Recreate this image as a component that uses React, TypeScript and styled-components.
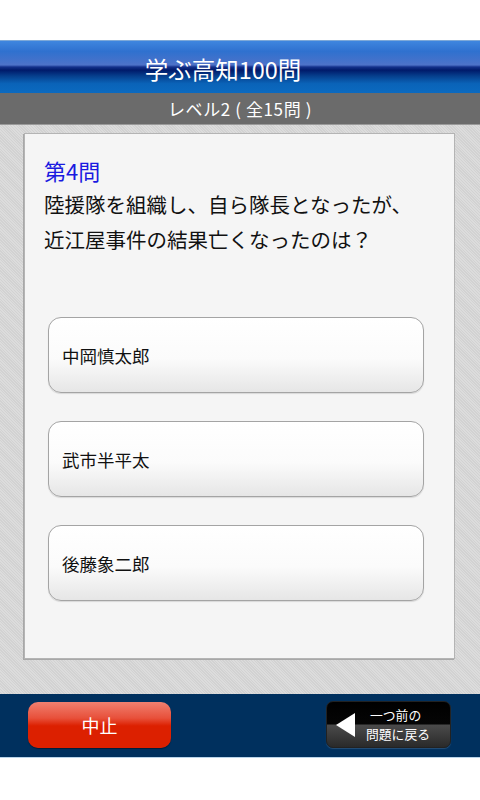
import React from "react";
import styled, { createGlobalStyle } from "styled-components";

const Global = createGlobalStyle`
  html, body { margin: 0; padding: 0; background: #ffffff; }
  body { font-family: "Noto Sans CJK JP", "Noto Sans", sans-serif; }
  * { box-sizing: border-box; }
`;

const Screen = styled.div`
  width: 480px;
  height: 800px;
  display: flex;
  flex-direction: column;
  background: #ffffff;
`;

const TopGap = styled.div`
  height: 40px;
  flex: none;
`;

const TitleBar = styled.div`
  height: 53px;
  flex: none;
  display: flex;
  align-items: center;
  justify-content: center;
  padding-right: 34px;
  padding-top: 4px;
  background: linear-gradient(
    to bottom,
    #3f86df 0%,
    #2f71cf 20%,
    #4d72c8 46%,
    #13308a 50%,
    #001a6a 56%,
    #06418f 68%,
    #0a63b8 82%,
    #0b6ac0 100%
  );
  border-top: 1px solid #7ea9d8;
  color: #ffffff;
  font-size: 23.5px;
  font-weight: 400;
`;

const SubBar = styled.div`
  height: 32px;
  flex: none;
  display: flex;
  align-items: center;
  justify-content: center;
  background: #6b6b6b;
  border-bottom: 1px solid #9a9a9a;
  color: #ffffff;
  font-size: 17px;
  font-weight: 400;
  letter-spacing: 0.6px;
  white-space: pre;
`;

const Content = styled.div`
  flex: none;
  height: 569px;
  padding: 8px 25px 35px 24px;
  display: flex;
  background-color: #d7d7d7;
  background-image: repeating-linear-gradient(
    45deg,
    #dcdcdc 0px,
    #dcdcdc 1px,
    #d2d2d2 1px,
    #d2d2d2 2px
  );
`;

const Card = styled.div`
  flex: 1;
  background: #f5f5f5;
  border: 1px solid #b4b4b4;
  box-shadow: -1px 1px 0 #a8a8a8;
  padding: 21px 20px 0 19px;
  display: flex;
  flex-direction: column;
`;

const QNumber = styled.div`
  color: #1a1ae0;
  font-size: 22px;
  line-height: 30px;
`;

const QText = styled.div`
  color: #111111;
  font-size: 20.5px;
  line-height: 35px;
  margin-top: 2px;
  white-space: nowrap;
`;

const Choices = styled.div`
  margin-top: 60px;
  padding-left: 4px;
  display: flex;
  flex-direction: column;
  gap: 28px;
`;

const Choice = styled.button`
  height: 76px;
  width: 376px;
  display: flex;
  align-items: center;
  padding: 0 0 0 13px;
  border: 1px solid #a4a4a4;
  border-radius: 13px;
  background: linear-gradient(to bottom, #ffffff 0%, #fbfbfb 55%, #e6e6e6 100%);
  box-shadow: 0 1px 1px rgba(0, 0, 0, 0.12);
  font-family: "Noto Sans CJK JP", "Noto Sans", sans-serif;
  font-size: 17.5px;
  color: #111111;
  text-align: left;
  cursor: pointer;
`;

const Footer = styled.div`
  height: 64px;
  flex: none;
  background: #00305e;
  border-bottom: 1px solid #b9d4ea;
  display: flex;
  align-items: center;
  justify-content: space-between;
  padding: 0 29px 2px 28px;
`;

const StopButton = styled.button`
  width: 143px;
  height: 46px;
  border: none;
  border-radius: 10px;
  background: linear-gradient(to bottom, #f08070 0%, #e8503a 35%, #dc2000 52%, #dc2000 100%);
  box-shadow: 0 1px 1px rgba(0, 0, 0, 0.4);
  color: #ffffff;
  font-family: "Noto Sans CJK JP", "Noto Sans", sans-serif;
  font-size: 18px;
  display: flex;
  align-items: center;
  justify-content: center;
  cursor: pointer;
`;

const BackButton = styled.button`
  width: 125px;
  height: 47px;
  border: 1px solid #222;
  border-radius: 7px;
  background: linear-gradient(to bottom, #000000 0%, #050505 48%, #4a4a4a 52%, #2a2a2a 100%);
  box-shadow: 0 1px 1px rgba(255, 255, 255, 0.15);
  display: flex;
  align-items: center;
  padding: 1px 0 0 9px;
  gap: 11px;
  color: #ffffff;
  font-family: "Noto Sans CJK JP", "Noto Sans", sans-serif;
  cursor: pointer;
`;

const BackText = styled.span`
  display: flex;
  flex-direction: column;
  font-size: 12.8px;
  line-height: 18.6px;
  text-align: left;
`;

const BackLine = styled.span<{ indent?: number }>`
  padding-left: ${(p) => p.indent ?? 0}px;
`;

const choices = ["中岡慎太郎", "武市半平太", "後藤象二郎"];

export default function App() {
  return (
    <Screen>
      <Global />
      <TopGap />
      <TitleBar>学ぶ高知100問</TitleBar>
      <SubBar>{"レベル2 ( 全15問 )"}</SubBar>
      <Content>
        <Card>
          <QNumber>第4問</QNumber>
          <QText>
            陸援隊を組織し、自ら隊長となったが、
            <br />
            近江屋事件の結果亡くなったのは？
          </QText>
          <Choices>
            {choices.map((c) => (
              <Choice key={c}>{c}</Choice>
            ))}
          </Choices>
        </Card>
      </Content>
      <Footer>
        <StopButton>中止</StopButton>
        <BackButton>
          <svg width="19" height="24" viewBox="0 0 19 24">
            <polygon points="19,0 19,24 0,12" fill="#ffffff" />
          </svg>
          <BackText>
            <BackLine indent={4}>一つ前の</BackLine>
            <BackLine>問題に戻る</BackLine>
          </BackText>
        </BackButton>
      </Footer>
    </Screen>
  );
}
